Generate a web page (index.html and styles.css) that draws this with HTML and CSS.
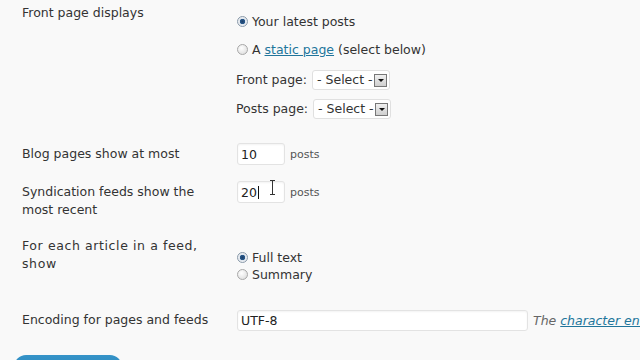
FILE: index.html
```html
<!DOCTYPE html>
<html>
<head>
<meta charset="utf-8">
<link rel="stylesheet" href="styles.css">
</head>
<body>
<div class="page">
  <div class="row row1">
    <div class="label">Front page displays</div>
    <div class="field">
      <div class="opt opt-a"><span class="radio checked"></span>Your latest posts</div>
      <div class="opt opt-b"><span class="radio"></span>A <a class="link" href="#">static page</a> (select below)</div>
      <div class="sel-line sel-a">Front page: <span class="select">- Select -<span class="arrow"></span></span></div>
      <div class="sel-line sel-b">Posts page: <span class="select">- Select -<span class="arrow"></span></span></div>
    </div>
  </div>
  <div class="row row2">
    <div class="label single">Blog pages show at most</div>
    <div class="field inline"><span class="input small">10</span><span class="unit">posts</span></div>
  </div>
  <div class="row row3">
    <div class="label two">Syndication feeds show the most recent</div>
    <div class="field inline"><span class="input small">20<span class="caret"></span><span class="ibeam"></span></span><span class="unit">posts</span></div>
  </div>
  <div class="row row4">
    <div class="label two spaced">For each article in a feed, show</div>
    <div class="field radios">
      <div class="opt2"><span class="radio checked"></span>Full text</div>
      <div class="opt2"><span class="radio"></span>Summary</div>
    </div>
  </div>
  <div class="row row5">
    <div class="label enc">Encoding for pages and feeds</div>
    <div class="field inline clip"><span class="input wide">UTF-8</span><span class="desc">The <a class="link" href="#">character enco</a></span></div>
  </div>
  <div class="button"></div>
</div>
</body>
</html>
```
FILE: styles.css
```css
html, body {
  margin: 0;
  padding: 0;
  background: #f9f9f9;
  overflow: hidden;
}
body {
  width: 640px;
  height: 360px;
  font-family: "DejaVu Sans", Verdana, sans-serif;
  font-size: 12.5px;
  color: #333;
}
.page {
  padding-left: 22px;
  padding-top: 4px;
}
.row {
  display: grid;
  grid-template-columns: 214px 1fr;
  align-items: start;
}
.label {
  line-height: 18px;
  width: 200px;
}
.label.spaced { letter-spacing: 0.6px; width: 180px; }
.row1 .field { padding-top: 9px; }
.opt { height: 18px; line-height: 18px; white-space: nowrap; }
.opt-a { margin-bottom: 10px; }
.radio {
  display: inline-block;
  vertical-align: -1px;
  width: 9px;
  height: 9px;
  border: 1px solid #a8a8a8;
  border-radius: 50%;
  background: radial-gradient(circle at 40% 35%, #ffffff, #d8d8d8);
  margin-left: 1px;
  margin-right: 4px;
  box-sizing: content-box;
}
.radio.checked {
  background: radial-gradient(circle at 50% 50%, #1d3f6a 0, #2a5a8c 2.5px, #dfe6ee 3px, #f2f2f2 5px);
  border-color: #8a9aaa;
}
.link { color: #21759b; text-decoration: underline; }
.sel-line { height: 20px; line-height: 20px; display: flex; align-items: center; white-space: nowrap; }
.sel-a { margin-top: 11px; }
.sel-b { margin-top: 9px; }
.select {
  display: inline-flex;
  align-items: center;
  height: 18px;
  border: 1px solid #e0e0e0;
  border-radius: 3px;
  background: #fff;
  padding-left: 4px;
  margin-left: 5px;
  padding-right: 2px;
}
.arrow {
  display: inline-block;
  width: 11px;
  height: 11px;
  border: 1px solid #777;
  background: linear-gradient(#f0f0f0, #cfcfcf);
  margin-left: 1px;
  position: relative;
}
.arrow::after {
  content: "";
  position: absolute;
  left: 3px;
  top: 4px;
  border-left: 3px solid transparent;
  border-right: 3px solid transparent;
  border-top: 3px solid #111;
}
.row2 { margin-top: 24px; }
.row2 .label { line-height: 22px; }
.inline { display: flex; align-items: center; }
.input {
  display: inline-flex;
  align-items: center;
  box-sizing: border-box;
  height: 22px;
  background: #fff;
  border: 1px solid #e3e3e3;
  border-radius: 3px;
  box-shadow: inset 0 1px 2px rgba(0,0,0,0.05);
  padding-left: 3px;
  color: #222;
  position: relative;
  flex: none;
}
.input.small { width: 48px; margin-left: 1px; }
.unit { margin-left: 5px; color: #555; font-size: 11px; }
.caret { display: inline-block; width: 1px; height: 13px; background: #111; margin-left: 1px; }
.ibeam {
  position: absolute;
  left: 34px;
  top: -2px;
  width: 1px;
  height: 15px;
  background: #333;
}
.ibeam::before, .ibeam::after {
  content: "";
  position: absolute;
  left: -2px;
  width: 5px;
  height: 1px;
  background: #333;
}
.ibeam::before { top: 0; }
.ibeam::after { bottom: 0; }
.row3 { margin-top: 16px; }
.row3 .label { padding-top: 2px; }
.row4 { margin-top: 18px; }
.radios { padding-top: 12px; }
.opt2 { height: 17px; line-height: 17px; white-space: nowrap; }
.row5 { margin-top: 27px; }
.row5 .label { line-height: 20px; white-space: nowrap; }
.clip { overflow: hidden; white-space: nowrap; }
.input.wide { width: 291px; height: 21px; margin-left: 1px; }
.desc { margin-left: 5px; font-style: italic; color: #666; }
.button {
  margin-top: 24px;
  margin-left: -8px;
  width: 108px;
  height: 28px;
  border-radius: 12px;
  background: linear-gradient(#3593c8, #2580b3);
}
```
